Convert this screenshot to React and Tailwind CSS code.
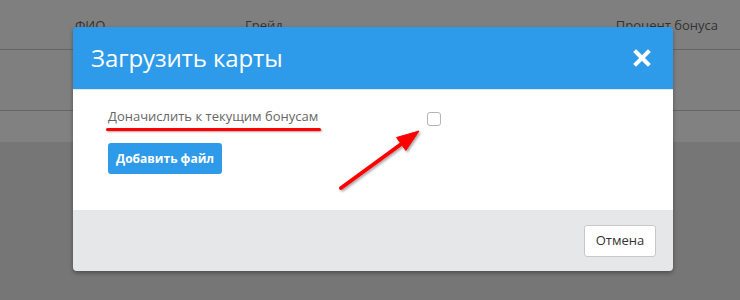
import React from "react";

export default function App() {
  return (
    <div className="relative w-[740px] h-[300px] overflow-hidden bg-[#767676] font-['Open_Sans',sans-serif]">
      {/* background table */}
      <div className="flex flex-col">
        <div className="h-[50px] bg-[#7f7f7f] border-b border-[#656565] flex items-end pb-[14px] text-[13px] text-[#333]">
          <div className="w-[75px]" />
          <div className="w-[170px]">ФИО</div>
          <div className="flex-1">Грейд</div>
          <div className="pr-[22px]">Процент бонуса</div>
        </div>
        <div className="h-[61px] bg-[#7f7f7f] border-b border-[#656565]" />
        <div className="h-[31px] bg-[#818181]" />
      </div>

      {/* modal */}
      <div className="absolute left-[73px] top-[27px] w-[600px] h-[244px] rounded-[4px] overflow-hidden shadow-[0_2px_4px_rgba(0,0,0,0.35)] flex flex-col">
        <div className="h-[63px] bg-[#2d9bea] border-b border-[#dfe6ec] flex items-center justify-between pl-[18px] pr-[22px]">
          <div className="text-white text-[24px] leading-none tracking-[-0.1px]">Загрузить карты</div>
          <svg width="18" height="18" viewBox="0 0 18 18">
            <path d="M3 3 L15 15 M15 3 L3 15" stroke="white" strokeWidth="4" strokeLinecap="square" />
          </svg>
        </div>
        <div className="h-[120px] bg-white relative pl-[35px] pt-[17px]">
          <div className="flex items-start">
            <div className="relative text-[13px] text-[#666] leading-[18px] w-[319px]">
              Доначислить к текущим бонусам
              <div className="absolute left-[-2px] top-[21px] w-[215px] h-[3px] bg-[#f00] rounded-full shadow-[1px_1px_2px_rgba(0,0,0,0.35)]" />
            </div>
            <div className="w-[14px] h-[14px] mt-[5px] border border-[#b5b5b5] rounded-[3px] bg-white" />
          </div>
          <button className="mt-[17px] h-[31px] px-[8px] bg-[#2d9bea] rounded-[3px] text-white text-[12px] font-bold">
            Добавить файл
          </button>
          <svg className="absolute left-0 top-0" width="600" height="120" viewBox="0 0 600 120">
            <defs>
              <filter id="sh" x="-20%" y="-20%" width="140%" height="140%">
                <feDropShadow dx="1.5" dy="1.5" stdDeviation="1.2" floodColor="#000" floodOpacity="0.35" />
              </filter>
            </defs>
            <g filter="url(#sh)">
              <path d="M268 98 L331 52" stroke="#f00" strokeWidth="4" strokeLinecap="round" />
              <path d="M346 41 L323.5 47.5 L332.9 60.5 Z" fill="#f00" stroke="#f00" strokeWidth="1" strokeLinejoin="round" />
            </g>
          </svg>
        </div>
        <div className="flex-1 bg-[#e6e7e9] flex items-center justify-end pr-[17px]">
          <button className="h-[32px] w-[72px] bg-white border border-[#c8c8c8] rounded-[3px] text-[13px] text-[#333]">
            Отмена
          </button>
        </div>
      </div>
    </div>
  );
}
